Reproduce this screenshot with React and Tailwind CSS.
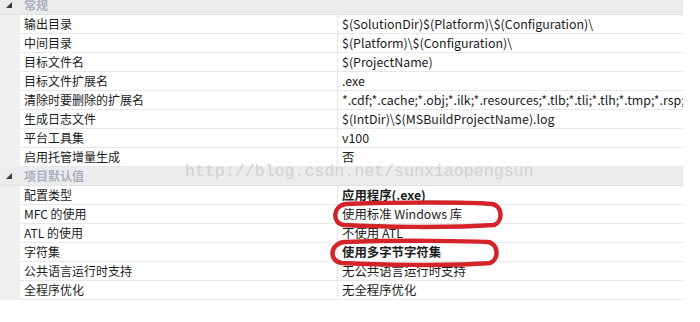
import React from "react";

const font = "font-['Noto_Sans_CJK_SC','Noto_Sans',sans-serif]";

function Header({ label }) {
  return (
    <div className="flex h-[19px] items-center bg-[#ececec] border-b border-[#e2e2e2]">
      <div className="flex w-[20px] shrink-0 items-center justify-center">
        <svg width="6" height="6" viewBox="0 0 6 6" className="ml-[-2px]">
          <polygon points="6,0 6,6 0,6" fill="#3c3c3c" />
        </svg>
      </div>
      <div className="pl-[4px] text-[12px] font-bold text-[#aab0c0] leading-none">{label}</div>
    </div>
  );
}

function Row({ name, value, bold }) {
  return (
    <div className="flex h-[19px]">
      <div className="w-[20px] shrink-0 bg-[#f0f0f0]" />
      <div className="flex w-[318px] shrink-0 items-center border-b border-r border-[#e8e8e8] pl-[4px] text-[12px] leading-none text-[#1c1c1c] whitespace-nowrap">
        {name}
      </div>
      <div
        className={
          "flex min-w-0 flex-1 items-center overflow-hidden border-b border-[#e8e8e8] pl-[4px] text-[12.4px] leading-none text-[#1c1c1c] whitespace-nowrap " +
          (bold ? "font-bold" : "")
        }
      >
        {value}
      </div>
    </div>
  );
}

export default function App() {
  return (
    <div className={"relative h-[322px] w-[700px] overflow-hidden bg-white " + font}>
      <div className="mt-[-4px] w-[683px]">
        <Header label="常规" />
        <Row name="输出目录" value="$(SolutionDir)$(Platform)\$(Configuration)\" />
        <Row name="中间目录" value="$(Platform)\$(Configuration)\" />
        <Row name="目标文件名" value="$(ProjectName)" />
        <Row name="目标文件扩展名" value=".exe" />
        <Row
          name="清除时要删除的扩展名"
          value="*.cdf;*.cache;*.obj;*.ilk;*.resources;*.tlb;*.tli;*.tlh;*.tmp;*.rsp;*.pgc;*.pgd;*.meta;*.tlog;*.manifest"
        />
        <Row name="生成日志文件" value="$(IntDir)\$(MSBuildProjectName).log" />
        <Row name="平台工具集" value="v100" />
        <Row name="启用托管增量生成" value="否" />
        <Header label="项目默认值" />
        <Row name="配置类型" value="应用程序(.exe)" bold />
        <Row name="MFC 的使用" value="使用标准 Windows 库" />
        <Row name="ATL 的使用" value="不使用 ATL" />
        <Row name="字符集" value="使用多字节字符集" bold />
        <Row name="公共语言运行时支持" value="无公共语言运行时支持" />
        <Row name="全程序优化" value="无全程序优化" />
      </div>

      <div className="pointer-events-none absolute left-[185px] top-[164px] font-['Liberation_Mono',monospace] text-[16.6px] leading-none text-[#d2d2d2]">
        http://blog.csdn.net/sunxiaopengsun
      </div>

      <svg
        className="pointer-events-none absolute left-0 top-0"
        width="700"
        height="322"
        viewBox="0 0 700 322"
      >
        <path
          d="M346 204 C400 202 470 202 492 204 C503 206 503 222 494 225 C450 228 380 227 344 225 C332 224 332 206 346 204 Z"
          fill="none"
          stroke="#d3242a"
          strokeWidth="4.5"
          strokeLinejoin="round"
        />
        <path
          d="M344 242 C400 240 470 241 488 242 C499 244 499 260 490 263 C450 266 380 265 342 263 C329 262 329 244 344 242 Z"
          fill="none"
          stroke="#d3242a"
          strokeWidth="4.5"
          strokeLinejoin="round"
        />
      </svg>
    </div>
  );
}
